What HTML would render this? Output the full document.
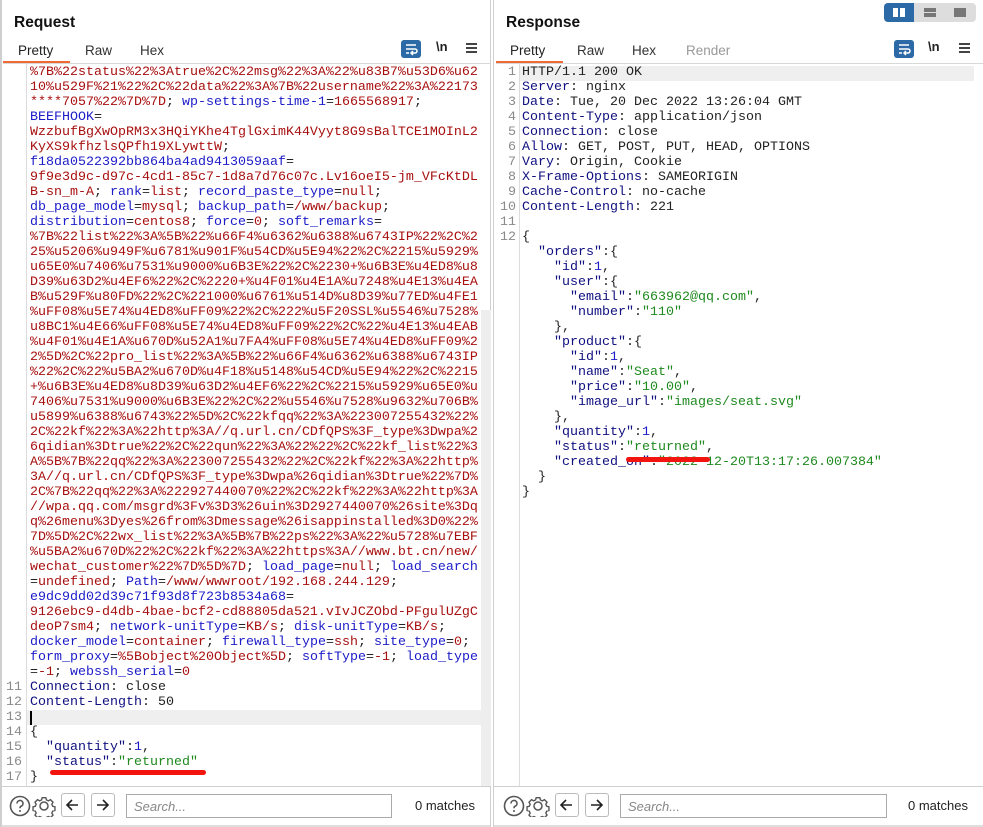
<!DOCTYPE html>
<html><head><meta charset="utf-8">
<style>
*{margin:0;padding:0;box-sizing:border-box}
body{width:983px;height:827px;background:#fff;position:relative;overflow:hidden;font-family:"Liberation Sans",sans-serif}
.panel{position:absolute;top:0;height:827px;background:#fff}
.title{position:absolute;left:12px;top:14px;font-size:15.5px;font-weight:bold;color:#111}
.tab{position:absolute;top:43px;font-size:13.5px;color:#333}
.tab.dis{color:#999}
.uline{position:absolute;left:3px;top:61px;width:67px;height:2px;background:#f06a35}
.hline{position:absolute;left:3px;right:0;top:63px;height:1px;background:#d8d8d8}
.wrapbtn{position:absolute;top:40px;width:20px;height:18px;background:#2b6aa6;border-radius:3px}
.nl{position:absolute;top:39px;font-size:13px;font-weight:bold;color:#222}
.ham{position:absolute;top:43px;width:11px;height:10px;border-top:2px solid #444;border-bottom:2px solid #444}
.ham:after{content:"";position:absolute;left:0;right:0;top:2px;height:2px;background:#444}
.code{position:absolute;top:65px;font-family:"Liberation Mono",monospace;font-size:13.33px;line-height:15px;white-space:pre;color:#222}
.ln{position:absolute;top:65px;width:22px;text-align:right;font-family:"Liberation Mono",monospace;font-size:13.33px;line-height:15px;white-space:pre;color:#8a8a8a}
.gut{position:absolute;top:64px;width:1px;height:722px;background:#dcdcdc}
.r{color:#a81010}.b{color:#1c1cc8}.n{color:#101080}.g{color:#1f8a1f}
.bar{position:absolute;left:0;right:0;top:786px;height:1px;background:#cfcfcf}
.bot{position:absolute;left:0;right:0;bottom:0;height:2px;background:#dedede}
.btn{position:absolute;top:793px;width:24px;height:24px;border:1px solid #bbb;border-radius:3px;background:#fff}
.search{position:absolute;top:794px;height:24px;border:1px solid #aaa;font-size:13px;color:#888;font-style:italic;padding:4px 0 0 7px}
.match{position:absolute;top:798px;font-size:13px;color:#222}
.hl{position:absolute;height:15px;background:#efefef}
</style></head><body>

<!-- LEFT PANEL -->
<div class="panel" style="left:0;width:491px;border-left:2px solid #cfcfcf;border-right:1px solid #cfcfcf">
  <div class="title">Request</div>
  <div class="tab" style="left:16px;color:#222">Pretty</div>
  <div class="tab" style="left:83px">Raw</div>
  <div class="tab" style="left:138px">Hex</div>
  <div class="uline" style="left:1px"></div><div class="hline" style="left:1px"></div>
  <div class="wrapbtn" style="left:399px"><svg width="20" height="18" viewBox="0 0 20 18"><path d="M5 5h10M5 9h9a2 2 0 0 1 0 4h-3M12 11l-2 2 2 2M5 13h3" stroke="#fff" stroke-width="1.5" fill="none"/></svg></div>
  <div class="nl" style="left:434px">\n</div>
  <div class="ham" style="left:464px"></div>
  <div style="position:absolute;left:479px;top:310px;width:10px;height:476px;background:#eee"></div>
  <div class="hl" style="left:25px;width:454px;top:710px"></div>
  <div class="gut" style="left:24px"></div>
  <div class="ln" style="left:-2px;top:680px">11
12
13
14
15
16
17</div>
  <div class="code" style="left:28px"><span class="r">%7B%22status%22%3Atrue%2C%22msg%22%3A%22%u83B7%u53D6%u62
10%u529F%21%22%2C%22data%22%3A%7B%22username%22%3A%22173
****7057%22%7D%7D</span>; <span class="b">wp-settings-time-1</span>=<span class="r">1665568917</span>;
<span class="b">BEEFHOOK</span>=
<span class="r">WzzbufBgXwOpRM3x3HQiYKhe4TglGximK44Vyyt8G9sBalTCE1MOInL2
KyXS9kfhzlsQPfh19XLywttW</span>;
<span class="b">f18da0522392bb864ba4ad9413059aaf</span>=
<span class="r">9f9e3d9c-d97c-4cd1-85c7-1d8a7d76c07c.Lv16oeI5-jm_VFcKtDL
B-sn_m-A</span>; <span class="b">rank</span>=<span class="r">list</span>; <span class="b">record_paste_type</span>=<span class="r">null</span>;
<span class="b">db_page_model</span>=<span class="r">mysql</span>; <span class="b">backup_path</span>=<span class="r">/www/backup</span>;
<span class="b">distribution</span>=<span class="r">centos8</span>; <span class="b">force</span>=<span class="r">0</span>; <span class="b">soft_remarks</span>=
<span class="r">%7B%22list%22%3A%5B%22%u66F4%u6362%u6388%u6743IP%22%2C%2
25%u5206%u949F%u6781%u901F%u54CD%u5E94%22%2C%2215%u5929%
u65E0%u7406%u7531%u9000%u6B3E%22%2C%2230+%u6B3E%u4ED8%u8
D39%u63D2%u4EF6%22%2C%2220+%u4F01%u4E1A%u7248%u4E13%u4EA
B%u529F%u80FD%22%2C%221000%u6761%u514D%u8D39%u77ED%u4FE1
%uFF08%u5E74%u4ED8%uFF09%22%2C%222%u5F20SSL%u5546%u7528%
u8BC1%u4E66%uFF08%u5E74%u4ED8%uFF09%22%2C%22%u4E13%u4EAB
%u4F01%u4E1A%u670D%u52A1%u7FA4%uFF08%u5E74%u4ED8%uFF09%2
2%5D%2C%22pro_list%22%3A%5B%22%u66F4%u6362%u6388%u6743IP
%22%2C%22%u5BA2%u670D%u4F18%u5148%u54CD%u5E94%22%2C%2215
+%u6B3E%u4ED8%u8D39%u63D2%u4EF6%22%2C%2215%u5929%u65E0%u
7406%u7531%u9000%u6B3E%22%2C%22%u5546%u7528%u9632%u706B%
u5899%u6388%u6743%22%5D%2C%22kfqq%22%3A%223007255432%22%
2C%22kf%22%3A%22http%3A//q.url.cn/CDfQPS%3F_type%3Dwpa%2
6qidian%3Dtrue%22%2C%22qun%22%3A%22%22%2C%22kf_list%22%3
A%5B%7B%22qq%22%3A%223007255432%22%2C%22kf%22%3A%22http%
3A//q.url.cn/CDfQPS%3F_type%3Dwpa%26qidian%3Dtrue%22%7D%
2C%7B%22qq%22%3A%222927440070%22%2C%22kf%22%3A%22http%3A
//wpa.qq.com/msgrd%3Fv%3D3%26uin%3D2927440070%26site%3Dq
q%26menu%3Dyes%26from%3Dmessage%26isappinstalled%3D0%22%
7D%5D%2C%22wx_list%22%3A%5B%7B%22ps%22%3A%22%u5728%u7EBF
%u5BA2%u670D%22%2C%22kf%22%3A%22https%3A//www.bt.cn/new/
wechat_customer%22%7D%5D%7D</span>; <span class="b">load_page</span>=<span class="r">null</span>; <span class="b">load_search</span>
=<span class="r">undefined</span>; <span class="b">Path</span>=<span class="r">/www/wwwroot/192.168.244.129</span>;
<span class="b">e9dc9dd02d39c71f93d8f723b8534a68</span>=
<span class="r">9126ebc9-d4db-4bae-bcf2-cd88805da521.vIvJCZObd-PFgulUZgC
deoP7sm4</span>; <span class="b">network-unitType</span>=<span class="r">KB/s</span>; <span class="b">disk-unitType</span>=<span class="r">KB/s</span>;
<span class="b">docker_model</span>=<span class="r">container</span>; <span class="b">firewall_type</span>=<span class="r">ssh</span>; <span class="b">site_type</span>=<span class="r">0</span>;
<span class="b">form_proxy</span>=<span class="r">%5Bobject%20Object%5D</span>; <span class="b">softType</span>=<span class="r">-1</span>; <span class="b">load_type</span>
=<span class="r">-1</span>; <span class="b">webssh_serial</span>=<span class="r">0</span>
<span class="n">Connection</span>: close
<span class="n">Content-Length</span>: 50

{
  <span class="n">"quantity"</span>:<span class="b">1</span>,
  <span class="n">"status"</span>:<span class="g">"returned"</span>
}</div>
  <div style="position:absolute;left:28px;top:711px;width:2px;height:14px;background:#000"></div>
  <div style="position:absolute;left:48px;top:770px;width:156px;height:5px;background:#f2140e;border-radius:3px"></div>
  <div class="bar"></div>
  <svg style="position:absolute;left:7px;top:795px" width="48" height="22" viewBox="0 0 48 22"><circle cx="11" cy="11" r="9.5" stroke="#555" stroke-width="1.6" fill="none"/><path d="M8 8.5a3 3 0 1 1 4 2.8c-1 .4-1 1-1 2" stroke="#555" stroke-width="1.6" fill="none"/><circle cx="11" cy="16" r="1" fill="#555"/><g transform="translate(35,11)" stroke="#555" stroke-width="1.5" fill="none"><circle r="4"/><path d="M-2 -9h4l.6 2.4 2.2 1 2.2-1.3 2.8 2.8-1.3 2.2 1 2.2 2.4.6v4l-2.4.6-1 2.2 1.3 2.2-2.8 2.8-2.2-1.3-2.2 1-.6 2.4h-4l-.6-2.4-2.2-1-2.2 1.3-2.8-2.8 1.3-2.2-1-2.2-2.4-.6v-4l2.4-.6 1-2.2-1.3-2.2 2.8-2.8 2.2 1.3 2.2-1z" transform="scale(0.92)"/></g></svg>
  <div class="btn" style="left:59px"><svg width="22" height="22"><path d="M16 11H6M10 6l-5 5 5 5" stroke="#222" stroke-width="1.6" fill="none"/></svg></div>
  <div class="btn" style="left:89px"><svg width="22" height="22"><path d="M5 11h10M11 6l5 5-5 5" stroke="#222" stroke-width="1.6" fill="none"/></svg></div>
  <div class="search" style="left:124px;width:266px">Search...</div>
  <div class="match" style="left:413px">0 matches</div>
  <div class="bot"></div>
</div>

<!-- RIGHT PANEL -->
<div class="panel" style="left:493px;width:490px;border-left:1px solid #cfcfcf">
  <div style="position:absolute;left:390px;top:3px;width:92px;height:19px;background:#ddd;border-radius:4px"></div>
  <div style="position:absolute;left:390px;top:3px;width:30px;height:19px;background:#2b6aa6;border-radius:4px 0 0 4px"></div>
  <div style="position:absolute;left:399px;top:8px;width:5px;height:9px;background:#fff"></div>
  <div style="position:absolute;left:406px;top:8px;width:5px;height:9px;background:#fff"></div>
  <div style="position:absolute;left:430px;top:8px;width:12px;height:4px;background:#777"></div>
  <div style="position:absolute;left:430px;top:13px;width:12px;height:4px;background:#777"></div>
  <div style="position:absolute;left:460px;top:8px;width:12px;height:9px;background:#777"></div>
  <div class="title">Response</div>
  <div class="tab" style="left:16px;color:#222">Pretty</div>
  <div class="tab" style="left:83px">Raw</div>
  <div class="tab" style="left:138px">Hex</div>
  <div class="tab dis" style="left:192px">Render</div>
  <div class="uline" style="left:2px"></div><div class="hline" style="left:2px"></div>
  <div class="wrapbtn" style="left:400px"><svg width="20" height="18" viewBox="0 0 20 18"><path d="M5 5h10M5 9h9a2 2 0 0 1 0 4h-3M12 11l-2 2 2 2M5 13h3" stroke="#fff" stroke-width="1.5" fill="none"/></svg></div>
  <div class="nl" style="left:434px">\n</div>
  <div class="ham" style="left:465px"></div>
  <div class="hl" style="left:26px;width:454px;top:66px"></div>
  <div class="gut" style="left:25px"></div>
  <div class="ln" style="left:0">1
2
3
4
5
6
7
8
9
10
11
12</div>
  <div class="code" style="left:28px">HTTP/1.1 200 OK
<span class="n">Server</span>: nginx
<span class="n">Date</span>: Tue, 20 Dec 2022 13:26:04 GMT
<span class="n">Content-Type</span>: application/json
<span class="n">Connection</span>: close
<span class="n">Allow</span>: GET, POST, PUT, HEAD, OPTIONS
<span class="n">Vary</span>: Origin, Cookie
<span class="n">X-Frame-Options</span>: SAMEORIGIN
<span class="n">Cache-Control</span>: no-cache
<span class="n">Content-Length</span>: 221

{
  <span class="n">"orders"</span>:{
    <span class="n">"id"</span>:<span class="b">1</span>,
    <span class="n">"user"</span>:{
      <span class="n">"email"</span>:<span class="g">"663962@qq.com"</span>,
      <span class="n">"number"</span>:<span class="g">"110"</span>
    },
    <span class="n">"product"</span>:{
      <span class="n">"id"</span>:<span class="b">1</span>,
      <span class="n">"name"</span>:<span class="g">"Seat"</span>,
      <span class="n">"price"</span>:<span class="g">"10.00"</span>,
      <span class="n">"image_url"</span>:<span class="g">"images/seat.svg"</span>
    },
    <span class="n">"quantity"</span>:<span class="b">1</span>,
    <span class="n">"status"</span>:<span class="g">"returned"</span>,
    <span class="n">"created_on"</span>:<span class="g">"2022-12-20T13:17:26.007384"</span>
  }
}</div>
  <div style="position:absolute;left:132px;top:457px;width:84px;height:5px;background:#f2140e;border-radius:3px"></div>
  <div class="bar"></div>
  <svg style="position:absolute;left:9px;top:795px" width="48" height="22" viewBox="0 0 48 22"><circle cx="11" cy="11" r="9.5" stroke="#555" stroke-width="1.6" fill="none"/><path d="M8 8.5a3 3 0 1 1 4 2.8c-1 .4-1 1-1 2" stroke="#555" stroke-width="1.6" fill="none"/><circle cx="11" cy="16" r="1" fill="#555"/><g transform="translate(35,11)" stroke="#555" stroke-width="1.5" fill="none"><circle r="4"/><path d="M-2 -9h4l.6 2.4 2.2 1 2.2-1.3 2.8 2.8-1.3 2.2 1 2.2 2.4.6v4l-2.4.6-1 2.2 1.3 2.2-2.8 2.8-2.2-1.3-2.2 1-.6 2.4h-4l-.6-2.4-2.2-1-2.2 1.3-2.8-2.8 1.3-2.2-1-2.2-2.4-.6v-4l2.4-.6 1-2.2-1.3-2.2 2.8-2.8 2.2 1.3 2.2-1z" transform="scale(0.92)"/></g></svg>
  <div class="btn" style="left:61px"><svg width="22" height="22"><path d="M16 11H6M10 6l-5 5 5 5" stroke="#222" stroke-width="1.6" fill="none"/></svg></div>
  <div class="btn" style="left:91px"><svg width="22" height="22"><path d="M5 11h10M11 6l5 5-5 5" stroke="#222" stroke-width="1.6" fill="none"/></svg></div>
  <div class="search" style="left:126px;width:267px">Search...</div>
  <div class="match" style="left:414px">0 matches</div>
  <div class="bot"></div>
</div>
</body></html>
